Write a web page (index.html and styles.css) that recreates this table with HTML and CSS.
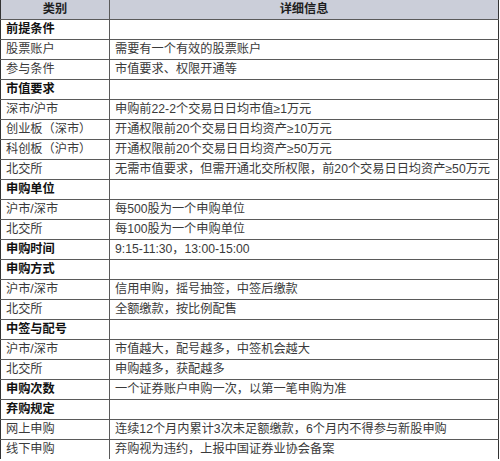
FILE: index.html
```html
<!DOCTYPE html>
<html lang="zh">
<head>
<meta charset="utf-8">
<link rel="stylesheet" href="styles.css">
</head>
<body>
<table class="info">
  <thead>
    <tr><th class="c1">类别</th><th class="c2">详细信息</th></tr>
  </thead>
  <tbody>
    <tr class="sec"><td>前提条件</td><td></td></tr>
    <tr><td>股票账户</td><td>需要有一个有效的股票账户</td></tr>
    <tr><td>参与条件</td><td>市值要求、权限开通等</td></tr>
    <tr class="sec"><td>市值要求</td><td></td></tr>
    <tr><td>深市/沪市</td><td>申购前22-2个交易日日均市值≥1万元</td></tr>
    <tr><td>创业板（深市）</td><td>开通权限前20个交易日日均资产≥10万元</td></tr>
    <tr><td>科创板（沪市）</td><td>开通权限前20个交易日日均资产≥50万元</td></tr>
    <tr><td>北交所</td><td>无需市值要求，但需开通北交所权限，前20个交易日日均资产≥50万元</td></tr>
    <tr class="sec"><td>申购单位</td><td></td></tr>
    <tr><td>沪市/深市</td><td>每500股为一个申购单位</td></tr>
    <tr><td>北交所</td><td>每100股为一个申购单位</td></tr>
    <tr class="sec"><td>申购时间</td><td class="plain">9:15-11:30，13:00-15:00</td></tr>
    <tr class="sec"><td>申购方式</td><td></td></tr>
    <tr><td>沪市/深市</td><td>信用申购，摇号抽签，中签后缴款</td></tr>
    <tr><td>北交所</td><td>全额缴款，按比例配售</td></tr>
    <tr class="sec"><td>中签与配号</td><td></td></tr>
    <tr><td>沪市/深市</td><td>市值越大，配号越多，中签机会越大</td></tr>
    <tr><td>北交所</td><td>申购越多，获配越多</td></tr>
    <tr class="sec"><td>申购次数</td><td class="plain">一个证券账户申购一次，以第一笔申购为准</td></tr>
    <tr class="sec"><td>弃购规定</td><td></td></tr>
    <tr><td>网上申购</td><td>连续12个月内累计3次未足额缴款，6个月内不得参与新股申购</td></tr>
    <tr><td>线下申购</td><td>弃购视为违约，上报中国证券业协会备案</td></tr>
  </tbody>
</table>
</body>
</html>
```

FILE: styles.css
```css
html, body {
  margin: 0;
  padding: 0;
  background: #ffffff;
}

.info {
  width: 499px;
  border-collapse: collapse;
  table-layout: fixed;
  font-family: "Liberation Sans", "Noto Sans CJK SC", sans-serif;
  font-size: 12.2px;
  color: #3a3a3a;
}

.info th,
.info td {
  height: 19px;
  padding: 0 0 0 5px;
  border: 1px solid #5a5a5a;
  line-height: 19px;
  white-space: nowrap;
  overflow: hidden;
  text-align: left;
}

.info thead th {
  background: #cbced9;
  color: #1e1e1e;
  font-weight: bold;
  text-align: center;
  padding: 0;
  border-top: 0;
}

.info .c1 {
  width: 108px;
}

.info td:first-child,
.info th:first-child {
  border-left: 1px solid #333333;
}

.info td:last-child,
.info th:last-child {
  border-right: 1px solid #333333;
}

.info .sec td:first-child {
  font-weight: bold;
  color: #111111;
}

.info .sec td.plain {
  font-weight: normal;
  color: #3a3a3a;
}

.info tbody tr:last-child td {
  border-bottom: 0;
}
```
